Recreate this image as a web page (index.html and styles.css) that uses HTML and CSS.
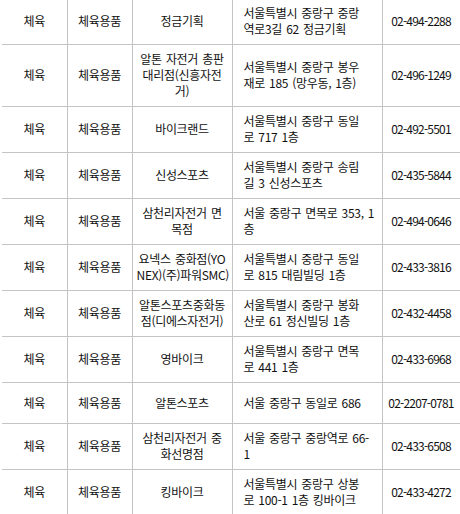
FILE: index.html
```html
<!DOCTYPE html>
<html lang="ko">
<head>
<meta charset="utf-8">
<title>체육용품 업체 목록</title>
<link rel="stylesheet" href="styles.css">
</head>
<body>
<div class="wrap">
<table class="list">
  <colgroup>
    <col class="c-cat">
    <col class="c-sub">
    <col class="c-name">
    <col class="c-addr">
    <col class="c-tel">
  </colgroup>
  <tbody>
    <tr><td>체육</td><td>체육용품</td><td class="name">정금기획</td><td class="addr">서울특별시 중랑구 중랑<br>역로3길 62 정금기획</td><td class="tel">02-494-2288</td></tr>
    <tr><td>체육</td><td>체육용품</td><td class="name">알톤 자전거 총판<br>대리점(신흥자전<br>거)</td><td class="addr">서울특별시 중랑구 봉우<br>재로 185 (망우동, 1층)</td><td class="tel">02-496-1249</td></tr>
    <tr><td>체육</td><td>체육용품</td><td class="name">바이크랜드</td><td class="addr">서울특별시 중랑구 동일<br>로 717 1층</td><td class="tel">02-492-5501</td></tr>
    <tr><td>체육</td><td>체육용품</td><td class="name">신성스포츠</td><td class="addr">서울특별시 중랑구 송림<br>길 3 신성스포츠</td><td class="tel">02-435-5844</td></tr>
    <tr><td>체육</td><td>체육용품</td><td class="name">삼천리자전거 면<br>목점</td><td class="addr">서울 중랑구 면목로 353, 1<br>층</td><td class="tel">02-494-0646</td></tr>
    <tr><td>체육</td><td>체육용품</td><td class="name">요넥스 중화점(YO<br>NEX)(주)파워SMC)</td><td class="addr">서울특별시 중랑구 동일<br>로 815 대림빌딩 1층</td><td class="tel">02-433-3816</td></tr>
    <tr><td>체육</td><td>체육용품</td><td class="name">알톤스포츠중화동<br>점(디에스자전거)</td><td class="addr">서울특별시 중랑구 봉화<br>산로 61 정신빌딩 1층</td><td class="tel">02-432-4458</td></tr>
    <tr><td>체육</td><td>체육용품</td><td class="name">영바이크</td><td class="addr">서울특별시 중랑구 면목<br>로 441 1층</td><td class="tel">02-433-6968</td></tr>
    <tr><td>체육</td><td>체육용품</td><td class="name">알톤스포츠</td><td class="addr">서울 중랑구 동일로 686</td><td class="tel">02-2207-0781</td></tr>
    <tr><td>체육</td><td>체육용품</td><td class="name">삼천리자전거 중<br>화선명점</td><td class="addr">서울 중랑구 중랑역로 66-<br>1</td><td class="tel">02-433-6508</td></tr>
    <tr><td>체육</td><td>체육용품</td><td class="name">킹바이크</td><td class="addr">서울특별시 중랑구 상봉<br>로 100-1 1층 킹바이크</td><td class="tel">02-433-4272</td></tr>
  </tbody>
</table>
</div>
</body>
</html>
```

FILE: styles.css
```css
html, body {
  margin: 0;
  padding: 0;
  background: #ffffff;
}

.wrap {
  padding-left: 2px;
  margin-top: -1px;
}

.list {
  width: 458px;
  table-layout: fixed;
  border-collapse: collapse;
  font-family: "Noto Sans CJK KR", "Noto Sans", sans-serif;
  font-size: 12px;
  line-height: 16px;
  letter-spacing: -0.3px;
  word-spacing: 1px;
  color: #111111;
}

.c-cat { width: 65px; }
.c-sub { width: 65px; }
.c-name { width: 100px; }
.c-addr { width: 150px; }
.c-tel { width: 78px; }

.list td {
  height: 27px;
  padding: 6px 4px 7px;
  border: 1px solid #c4c4c4;
  border-top: none;
  text-align: center;
  vertical-align: middle;
  white-space: nowrap;
}

.list td:first-child {
  border-left: none;
}

.list td.addr {
  text-align: left;
  padding-left: 11px;
  padding-right: 4px;
}

.list td.tel {
  padding-left: 2px;
  padding-right: 2px;
  letter-spacing: -0.8px;
}
```
